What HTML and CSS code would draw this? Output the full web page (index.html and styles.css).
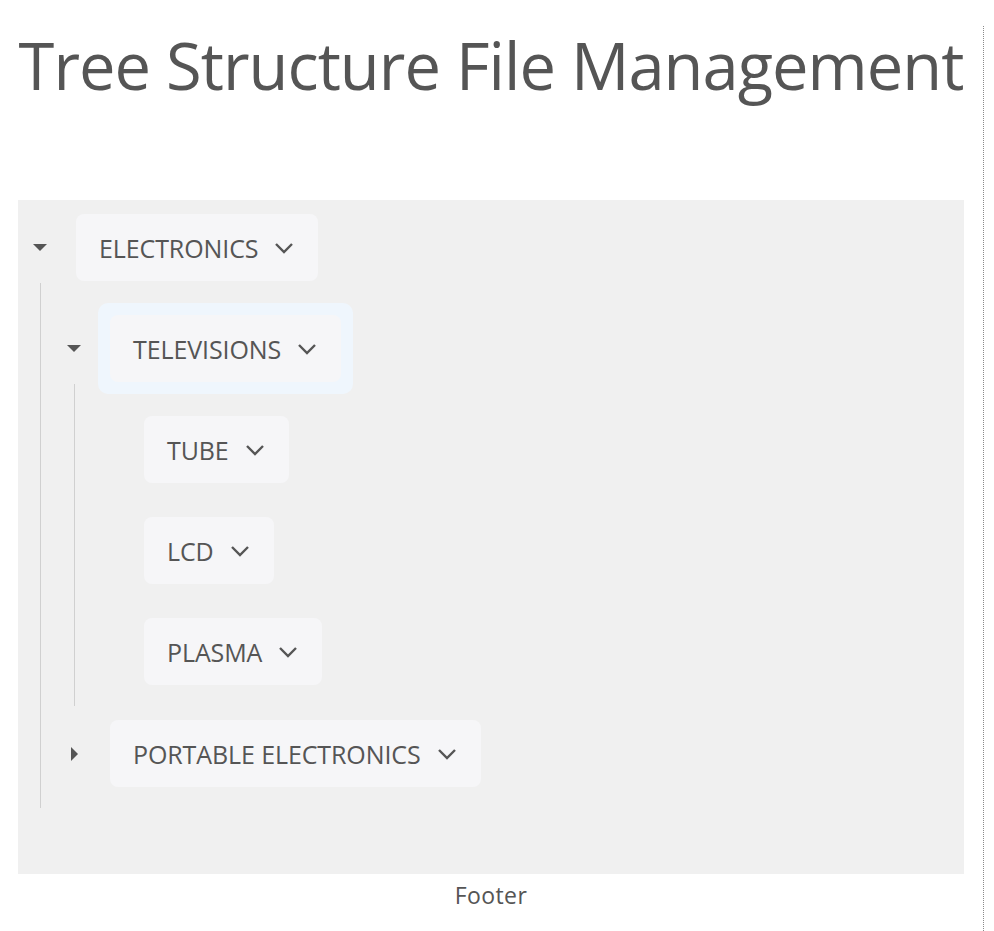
FILE: index.html
```html
<!DOCTYPE html>
<html lang="en">
<head>
<meta charset="utf-8">
<title>Tree Structure File Management</title>
<link rel="stylesheet" href="styles.css">
</head>
<body>
<div class="page">
  <h1 class="title">Tree Structure File Management</h1>
  <div class="tree">
    <div class="node">
      <div class="row">
        <span class="toggle"><svg width="14" height="7" viewBox="0 0 14 7"><polygon points="0,0 14,0 7,7" fill="#555"/></svg></span>
        <div class="label-wrap"><div class="label"><span>ELECTRONICS</span><svg class="chev" width="20" height="12" viewBox="0 0 20 12"><polyline points="2,2 10,10 18,2" fill="none" stroke="#555" stroke-width="2.4"/></svg></div></div>
      </div>
      <div class="children">
        <div class="node">
          <div class="row">
            <span class="toggle"><svg width="14" height="7" viewBox="0 0 14 7"><polygon points="0,0 14,0 7,7" fill="#555"/></svg></span>
            <div class="label-wrap selected"><div class="label"><span>TELEVISIONS</span><svg class="chev" width="20" height="12" viewBox="0 0 20 12"><polyline points="2,2 10,10 18,2" fill="none" stroke="#555" stroke-width="2.4"/></svg></div></div>
          </div>
          <div class="children">
            <div class="node">
              <div class="row">
                <span class="toggle"></span>
                <div class="label-wrap"><div class="label"><span>TUBE</span><svg class="chev" width="20" height="12" viewBox="0 0 20 12"><polyline points="2,2 10,10 18,2" fill="none" stroke="#555" stroke-width="2.4"/></svg></div></div>
              </div>
            </div>
            <div class="node">
              <div class="row">
                <span class="toggle"></span>
                <div class="label-wrap"><div class="label"><span>LCD</span><svg class="chev" width="20" height="12" viewBox="0 0 20 12"><polyline points="2,2 10,10 18,2" fill="none" stroke="#555" stroke-width="2.4"/></svg></div></div>
              </div>
            </div>
            <div class="node">
              <div class="row">
                <span class="toggle"></span>
                <div class="label-wrap"><div class="label"><span>PLASMA</span><svg class="chev" width="20" height="12" viewBox="0 0 20 12"><polyline points="2,2 10,10 18,2" fill="none" stroke="#555" stroke-width="2.4"/></svg></div></div>
              </div>
            </div>
          </div>
        </div>
        <div class="node">
          <div class="row">
            <span class="toggle"><svg width="7" height="14" viewBox="0 0 7 14"><polygon points="0,0 7,7 0,14" fill="#555"/></svg></span>
            <div class="label-wrap"><div class="label"><span>PORTABLE ELECTRONICS</span><svg class="chev" width="20" height="12" viewBox="0 0 20 12"><polyline points="2,2 10,10 18,2" fill="none" stroke="#555" stroke-width="2.4"/></svg></div></div>
          </div>
        </div>
      </div>
    </div>
  </div>
  <footer class="footer">Footer</footer>
</div>
</body>
</html>
```

FILE: styles.css
```css
html, body {
  margin: 0;
  padding: 0;
  background: #ffffff;
}

body {
  font-family: "Open Sans", "Noto Sans", sans-serif;
  color: #555555;
}

.page {
  width: 984px;
  min-height: 100vh;
  box-sizing: border-box;
  padding: 0 19px 0 18px;
  border-right: 1px dotted #8a8a8a;
}

.title {
  margin: 26px 0 96px;
  font-size: 65px;
  font-weight: 400;
  line-height: 78px;
  letter-spacing: -0.95px;
  text-align: center;
  white-space: nowrap;
  color: #555555;
}

.tree {
  background: #f0f0f0;
  padding: 0 0 66px 8px;
}

.row {
  display: flex;
  align-items: center;
  padding: 2px 0 8px;
}

.toggle {
  flex: none;
  width: 28px;
  display: flex;
  justify-content: center;
  align-items: center;
}

.toggle svg {
  display: block;
}

.label-wrap {
  margin-left: 10px;
  padding: 12px;
  border-radius: 10px;
}

.label-wrap.selected {
  background: #eff6fd;
}

.label {
  display: flex;
  align-items: center;
  gap: 16px;
  height: 67px;
  box-sizing: border-box;
  padding: 0 24px 0 23px;
  background: #f6f6f8;
  border-radius: 8px;
  font-size: 25px;
  letter-spacing: -0.1px;
  color: #555555;
  white-space: nowrap;
}

.chev {
  display: block;
  flex: none;
}

.children {
  margin: -18px 0 0 14px;
  padding: 18px 0 1px 19px;
  border-left: 1px solid #d0d0d0;
}

.footer {
  margin-top: 6px;
  font-size: 23px;
  line-height: 31px;
  letter-spacing: 0.4px;
  text-align: center;
  color: #555555;
}
```
